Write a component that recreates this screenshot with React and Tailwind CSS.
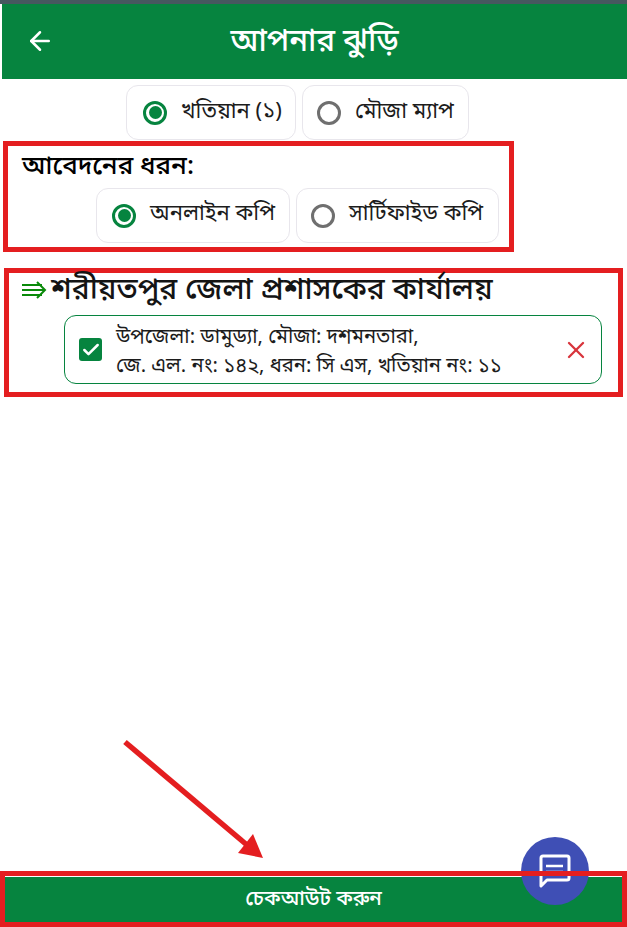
import { ArrowLeft, X, Check } from 'lucide-react';

const RadioCard = ({ label, checked, className, textClass }) => (
  <div className={`flex items-center bg-white border border-[#e8e6ec] rounded-xl ${className}`}>
    {checked ? (
      <span className="w-6 h-6 rounded-full border-[3px] border-[#06843f] flex items-center justify-center shrink-0">
        <span className="w-[13px] h-[13px] rounded-full bg-[#06843f]" />
      </span>
    ) : (
      <span className="w-6 h-6 rounded-full border-[3px] border-[#6f6f6f] shrink-0" />
    )}
    <span className={`ml-[14px] text-[22px] leading-none text-[#1c1c1c] whitespace-nowrap ${textClass}`}>{label}</span>
  </div>
);

const App = () => {
  return (
    <div className="relative w-[627px] h-[927px] bg-white overflow-hidden flex flex-col font-['Noto_Sans','Noto_Sans_Bengali','Liberation_Sans',sans-serif]">
      <div className="h-1 bg-[#46585f] shrink-0" />
      <header className="ml-[2px] h-[75px] bg-[#06843f] flex items-center justify-center relative shrink-0">
        <ArrowLeft className="absolute left-[23px] top-[22px] text-white" size={30} strokeWidth={2} />
        <h1 className="text-white text-[31px] font-medium leading-none -mt-1">আপনার ঝুড়ি</h1>
      </header>

      <div className="flex gap-[6px] mt-[6px] ml-[126px] h-[55px]">
        <RadioCard label="খতিয়ান (১)" checked className="w-[170px] pl-[16px]" textClass="-mt-[8px]" />
        <RadioCard label="মৌজা ম্যাপ" className="w-[167px] pl-[14px]" textClass="-mt-[8px]" />
      </div>

      <section className="ml-[3px] mt-[1px] w-[511px] h-[111px] border-[5px] border-[#e41e20] pl-[14px] pt-[3px]">
        <h2 className="text-[26px] font-medium leading-[30px] text-black">আবেদনের ধরন:</h2>
        <div className="flex gap-[6px] ml-[74px] mt-[9px] h-[55px]">
          <RadioCard label="অনলাইন কপি" checked className="w-[194px] pl-[15px]" textClass="-mt-[9px]" />
          <RadioCard label="সার্টিফাইড কপি" className="w-[203px] pl-[14px]" textClass="-mt-[9px]" />
        </div>
      </section>

      <section className="ml-[4px] mt-[16px] w-[619px] h-[129px] border-[5px] border-[#e41e20] pl-[12px]">
        <div className="flex items-center h-[34px]">
          <svg width="26" height="20" viewBox="0 0 26 20" fill="none" stroke="#0a8a0a" strokeWidth="2" className="shrink-0">
            <path d="M1 5h20M1 10h22M1 15h20M16 2l8 8-8 8" />
          </svg>
          <h2 className="ml-[4px] text-[30px] font-medium leading-none text-[#141414] whitespace-nowrap -mt-1">শরীয়তপুর জেলা প্রশাসকের কার্যালয়</h2>
        </div>
        <div className="mt-[8px] ml-[43px] w-[538px] h-[69px] border border-[#06843f] rounded-xl flex items-center pl-[14px] pr-[11px]">
          <span className="w-[23px] h-[23px] bg-[#06843f] rounded-[3px] flex items-center justify-center shrink-0">
            <Check className="text-white" size={20} strokeWidth={3} />
          </span>
          <div className="ml-[14px] flex-1 text-[20.2px] leading-[29px] text-[#1c1c1c] whitespace-nowrap">
            <div>উপজেলা: ডামুড্যা, মৌজা: দশমনতারা,</div>
            <div>জে. এল. নং: ১৪২, ধরন: সি এস, খতিয়ান নং: ১১</div>
          </div>
          <X className="text-[#d8343c] shrink-0" size={28} strokeWidth={2} />
        </div>
      </section>

      <div className="mt-auto h-[56px] border-[5px] border-[#e41e20] shrink-0">
        <div className="mt-[1px] h-[45px] bg-[#06843f] flex items-center justify-center">
          <span className="text-white text-[20.6px] font-medium -mt-1">চেকআউট করুন</span>
        </div>
      </div>

      {/* annotation arrow over the page */}
      <svg className="absolute left-[120px] top-[738px]" width="150" height="126" viewBox="0 0 150 126">
        <path d="M5 4L127 107" stroke="#e41e20" strokeWidth="5.5" />
        <path d="M133 96L143 120L118 115Z" fill="#e41e20" />
      </svg>

      <div className="absolute left-[521px] top-[837px] w-[68px] h-[68px] rounded-full bg-[#3f4fb5] flex items-center justify-center">
        <svg width="34" height="36" viewBox="0 0 34 36" fill="none" stroke="white" strokeWidth="3">
          <path d="M3 5a2 2 0 0 1 2-2h24a2 2 0 0 1 2 2v20a2 2 0 0 1-2 2H9l-6 6Z" strokeLinejoin="round" />
          <path d="M8 13h17M8 19h17" strokeWidth="2.5" />
        </svg>
      </div>
      <div className="absolute left-[521px] top-[871px] w-[68px] h-[5px] bg-[#e41e20]" />
    </div>
  );
};

export default App;
